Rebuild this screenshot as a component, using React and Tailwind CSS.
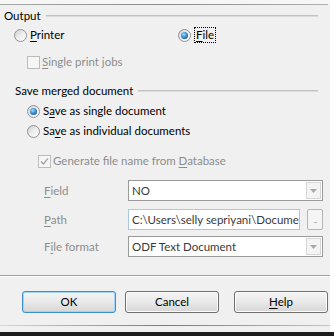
import React from "react";

function Radio({ checked }) {
  return (
    <span className="flex h-[13px] w-[13px] shrink-0 items-center justify-center rounded-full border border-[#929292] bg-gradient-to-br from-[#cfcfcf] via-[#eeeeee] to-[#ffffff]">
      {checked && (
        <span className="h-[7px] w-[7px] rounded-full bg-[radial-gradient(circle_at_40%_35%,#9fdcff,#2a80c8_55%,#0b3c70)]" />
      )}
    </span>
  );
}

function Check({ checked }) {
  return (
    <span className="flex h-[13px] w-[13px] shrink-0 items-center justify-center border border-[#bcbcbc] bg-[#f6f6f6]">
      {checked && (
        <svg width="9" height="9" viewBox="0 0 9 9">
          <path d="M1 4.6 L3.4 7 L8 1.4" fill="none" stroke="#a4a4a4" strokeWidth="1.4" />
        </svg>
      )}
    </span>
  );
}

function U({ children }) {
  return <span className="underline underline-offset-2">{children}</span>;
}

function Header({ children, pl, lineLeft }) {
  return (
    <div className={`flex h-[16px] items-center pr-[12px] ${pl}`}>
      <span className="leading-none">{children}</span>
      <div className={`flex flex-1 flex-col ${lineLeft}`}>
        <div className="h-px bg-[#c3c3c3]" />
        <div className="h-px bg-[#dadada]" />
      </div>
    </div>
  );
}

function Combo({ value }) {
  return (
    <div className="flex h-[21px] w-[195px] items-stretch border border-[#9a9a9a] bg-white">
      <span className="flex flex-1 items-center pl-[3px] text-[#3a3a3a]">{value}</span>
      <span className="m-px flex w-[15px] items-center justify-center border border-[#d6d6d6] bg-[#f4f4f4]">
        <svg width="7" height="4" viewBox="0 0 7 4">
          <path d="M0 0 H7 L3.5 4 Z" fill="#a8a8a8" />
        </svg>
      </span>
    </div>
  );
}

function Btn({ children, def, className = "" }) {
  return (
    <button
      className={`flex h-[22px] w-[94px] items-center justify-center rounded-[3px] border bg-gradient-to-b from-[#f4f4f4] via-[#e9e9e9] to-[#d6d6d6] text-black ${
        def ? "border-[#3c8fd0] shadow-[inset_0_0_0_1px_#9fd6f7]" : "border-[#707070] shadow-[inset_0_0_0_1px_#fcfcfc]"
      } ${className}`}
    >
      {children}
    </button>
  );
}

export default function App() {
  return (
    <div className="flex h-[336px] w-[334px] flex-col overflow-hidden bg-white font-['Lato','Noto_Sans',sans-serif] text-[11.5px] text-black">
      <div className="flex flex-1">
        <div className="flex w-[330px] flex-col bg-[#f0f0f0]">
          {/* window top edge */}
          <div className="h-[4px] bg-[#f6f6f6]" />
          <div className="mr-[2px] h-px bg-gradient-to-r from-[#a8a8a8] via-[#8a8a8a] to-[#b0b0b0]" />

          {/* Output */}
          <div className="mt-[3px]">
            <Header pl="pl-[4px]" lineLeft="ml-[5px]">Output</Header>
          </div>
          <div className="mt-px flex h-[20px] items-center pl-[14px]">
            <div className="flex w-[164px] items-center gap-[3px]">
              <Radio />
              <span><U>P</U>rinter</span>
            </div>
            <div className="flex items-center gap-[3px]">
              <Radio checked />
              <span className="border border-dotted border-black px-px leading-[14px]"><U>F</U>ile</span>
            </div>
          </div>
          <div className="mt-[7px] flex h-[20px] items-center gap-[2px] pl-[27px] text-[#8d8d8d]">
            <Check />
            <span><U>S</U>ingle print jobs</span>
          </div>

          {/* Save merged document */}
          <div className="mt-[11px]">
            <Header pl="pl-[15px]" lineLeft="ml-[5px]">Save merged document</Header>
          </div>
          <div className="mt-[2px] flex h-[20px] items-center gap-[3px] pl-[27px]">
            <Radio checked />
            <span>S<U>a</U>ve as single document</span>
          </div>
          <div className="flex h-[20px] items-center gap-[3px] pl-[27px]">
            <Radio />
            <span>Sa<U>v</U>e as individual documents</span>
          </div>
          <div className="mt-[10px] flex h-[20px] items-center gap-[2px] pl-[38px] text-[#8d8d8d]">
            <Check checked />
            <span>Generate file name from <U>D</U>atabase</span>
          </div>

          <div className="mt-[9px] flex h-[21px] items-center">
            <span className="w-[128px] pl-[44px] text-[#8d8d8d]"><U>F</U>ield</span>
            <Combo value="NO" />
          </div>
          <div className="mt-[8px] flex h-[21px] items-center">
            <span className="w-[128px] pl-[44px] text-[#8d8d8d]"><U>P</U>ath</span>
            <div className="flex h-[21px] w-[172px] items-center overflow-hidden whitespace-nowrap border border-[#a9c7e6] bg-white pl-[3px] text-[#3a3a3a]">
              C:\Users\selly sepriyani\Docume
            </div>
            <div className="ml-[7px] flex h-[21px] w-[16px] items-end justify-center rounded-[2px] border border-[#b5b5b5] bg-[#f4f4f4] pb-[5px] text-[8px] leading-none tracking-[-1px] text-[#a0a0a0]">
              ...
            </div>
          </div>
          <div className="mt-[6px] flex h-[21px] items-center">
            <span className="w-[128px] pl-[44px] text-[#8d8d8d]">F<U>i</U>le format</span>
            <Combo value="ODF Text Document" />
          </div>

          {/* separator */}
          <div className="mt-[18px] h-px bg-[#a0a0a0]" />
          <div className="h-px bg-white" />

          {/* buttons */}
          <div className="mt-[14px] flex pl-[22px]">
            <Btn def>OK</Btn>
            <Btn className="ml-[9px]">Cancel</Btn>
            <Btn className="ml-[15px]"><span><U>H</U>elp</span></Btn>
          </div>

          {/* bottom edge */}
          <div className="mt-[12px] h-px bg-gradient-to-r from-[#d8d8d8] via-[#7a7a7a] to-[#c4c4c4]" />
          <div className="flex-1 bg-[#f0f0f0]" />
        </div>
        <div className="flex-1 bg-white" />
      </div>
      <div className="h-[4px] bg-[#1c1c1c]" />
    </div>
  );
}
